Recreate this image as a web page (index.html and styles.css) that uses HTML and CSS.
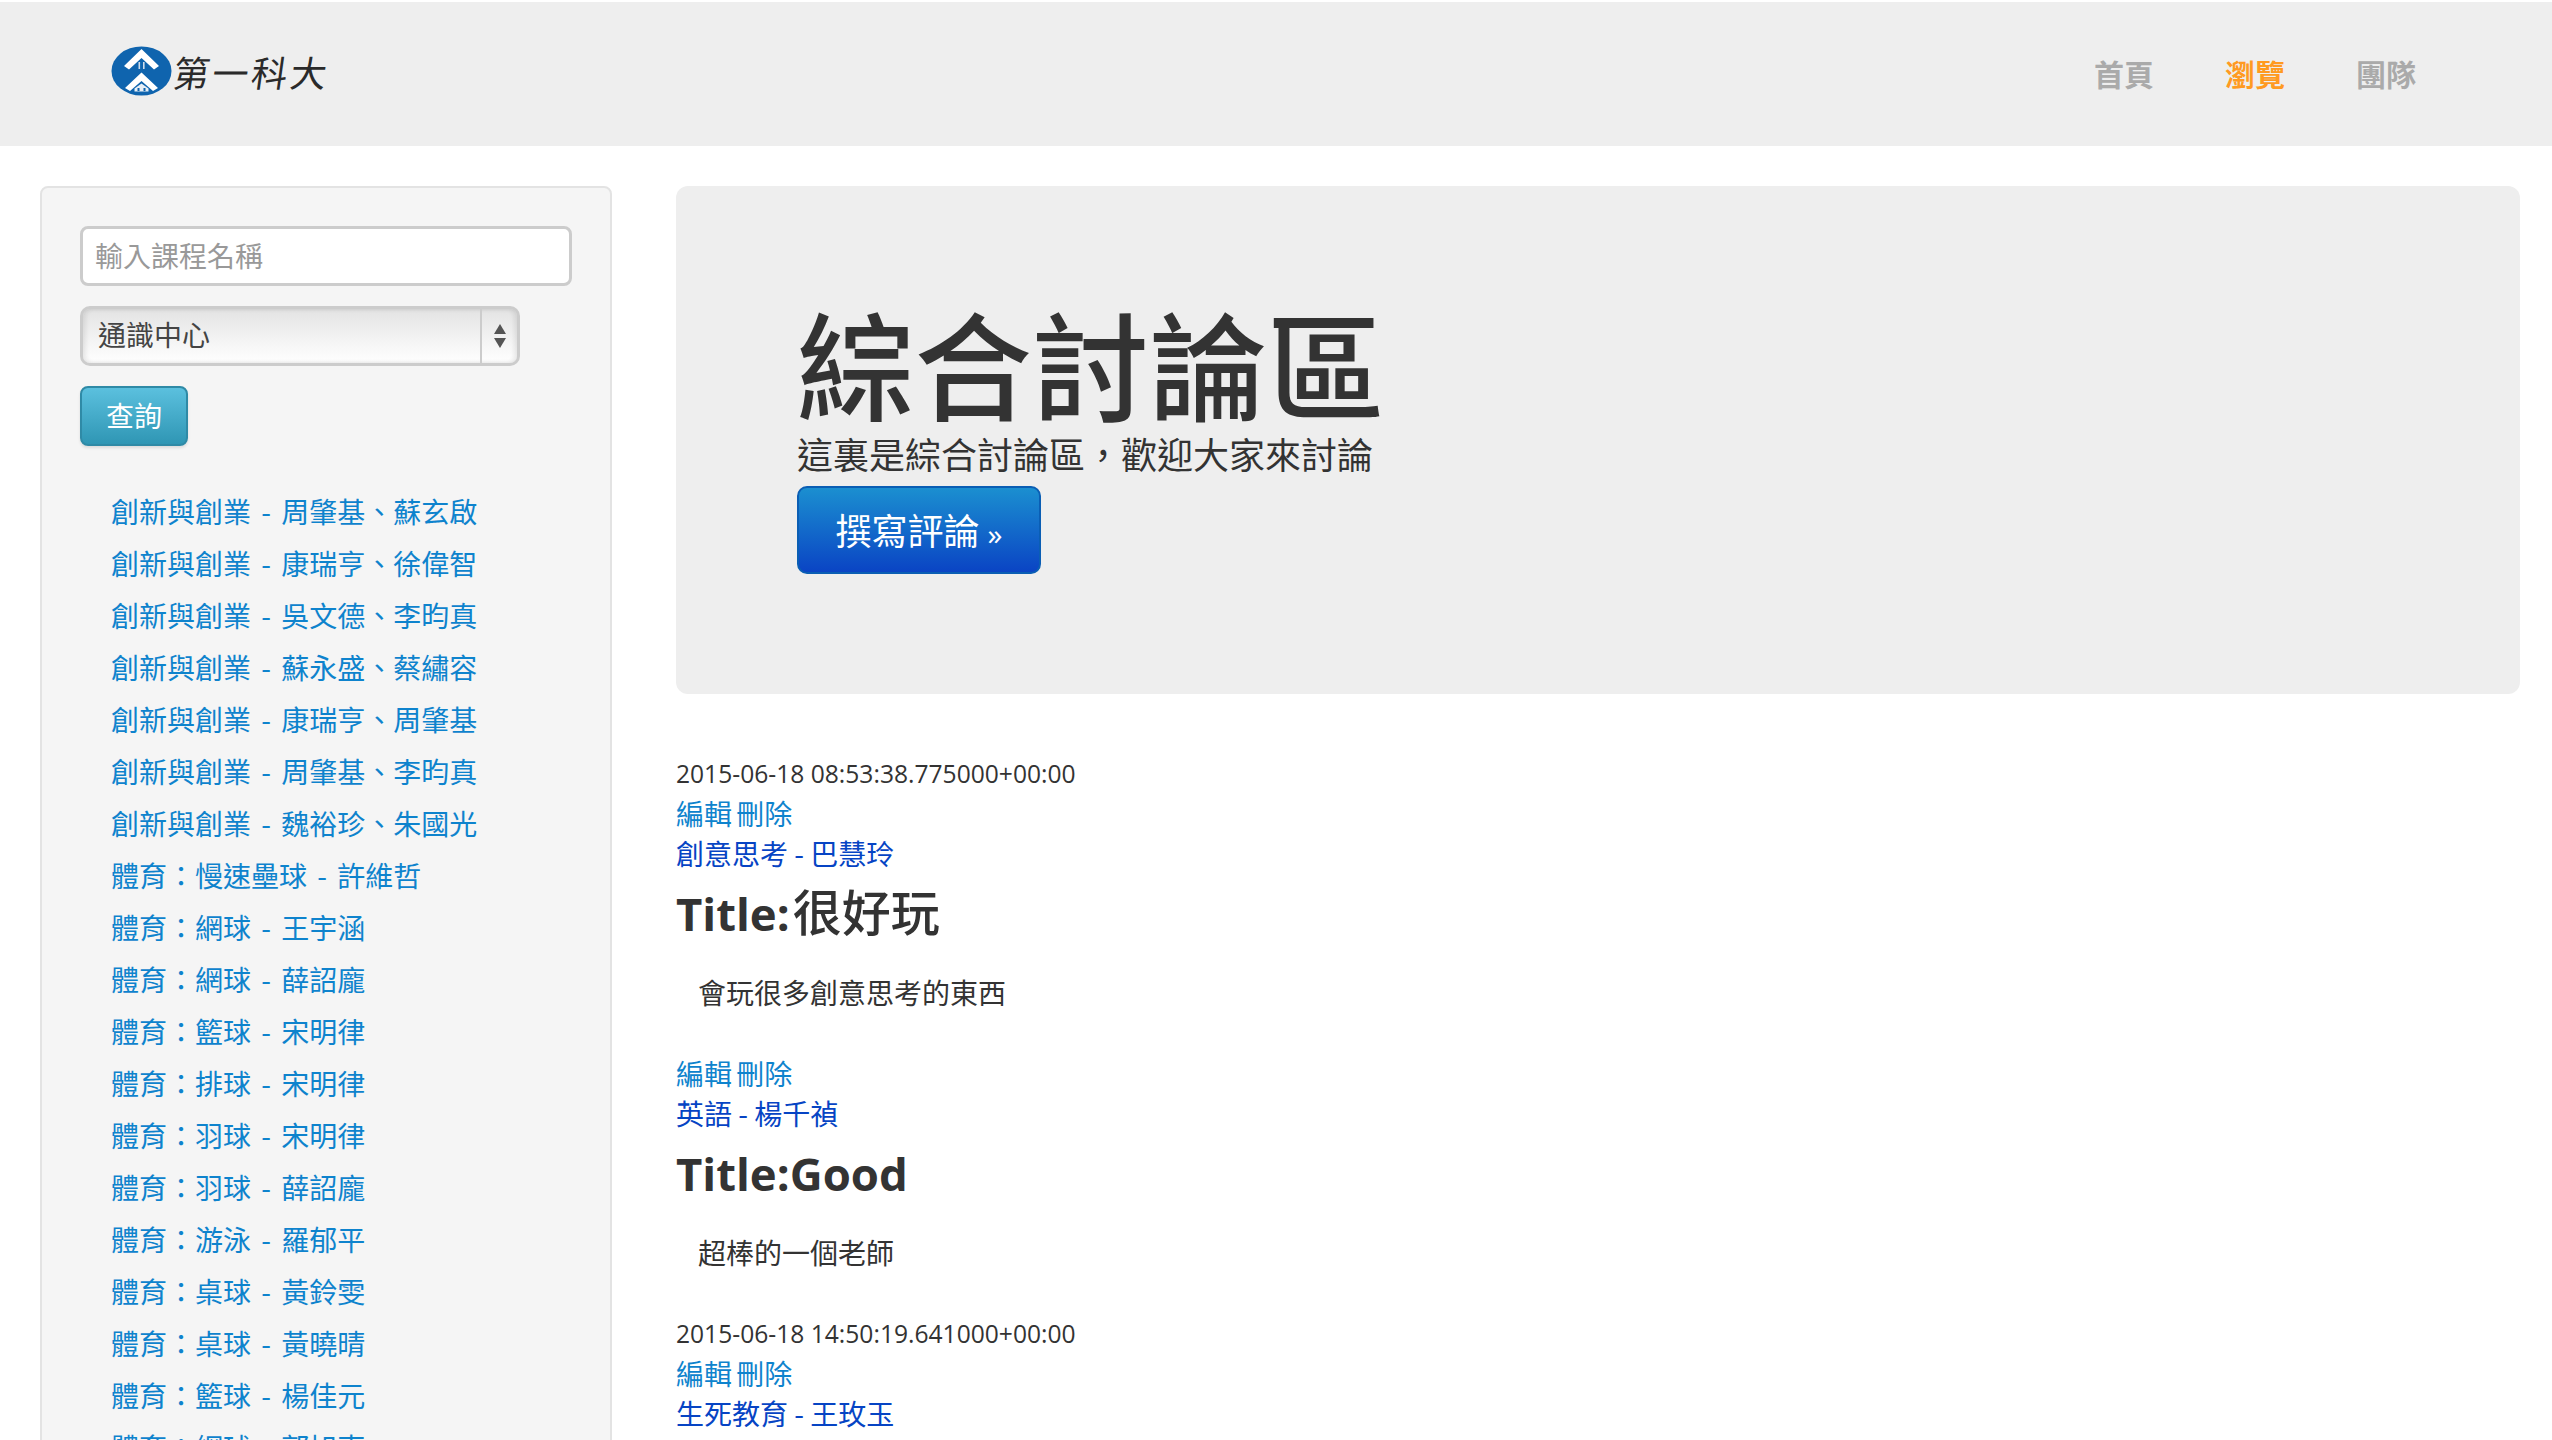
FILE: index.html
```html
<!DOCTYPE html>
<html lang="zh-Hant">
<head>
<meta charset="utf-8">
<title>綜合討論區</title>
<link rel="stylesheet" href="styles.css">
</head>
<body>
<header class="topbar">
  <a class="brand" href="#">
    <svg class="brand-mark" viewBox="0 0 62 50" aria-hidden="true">
      <ellipse cx="31.5" cy="25" rx="30" ry="24.5" fill="#0f64ae"/>
      <path d="M31.5 3 49 20 44 23.5 31.5 12 19 23.5 14 20Z" fill="#fff"/>
      <path d="M31.5 26.5 48 42 43 45 31.5 35 20 45 15 42Z" fill="#fff"/>
      <path d="M24.5 45.5v-3l7-5 7 5v3Z" fill="#e8eff6"/>
      <path d="M28.5 16h1.6v7h-1.6zM33 16h1.6v7H33z" fill="#cfdcea"/>
      <path d="M27.5 42h2v3h-2zM33.5 42h2v3h-2z" fill="#0f64ae"/>
    </svg>
    <span class="brand-text">第一科大</span>
  </a>
  <nav class="topnav">
    <a href="#">首頁</a>
    <a href="#" class="active">瀏覽</a>
    <a href="#">團隊</a>
  </nav>
</header>
<div class="layout">
  <aside class="well">
    <input class="search" type="text" placeholder="輸入課程名稱">
    <div class="select"><span class="select-value">通識中心</span><span class="select-arrows"><i class="up"></i><i class="down"></i></span></div>
    <button class="btn-info" type="button">查詢</button>
    <ul class="courses">
      <li><a href="#">創新與創業 - 周肇基、蘇玄啟</a></li>
      <li><a href="#">創新與創業 - 康瑞亨、徐偉智</a></li>
      <li><a href="#">創新與創業 - 吳文德、李昀真</a></li>
      <li><a href="#">創新與創業 - 蘇永盛、蔡繡容</a></li>
      <li><a href="#">創新與創業 - 康瑞亨、周肇基</a></li>
      <li><a href="#">創新與創業 - 周肇基、李昀真</a></li>
      <li><a href="#">創新與創業 - 魏裕珍、朱國光</a></li>
      <li><a href="#">體育：慢速壘球 - 許維哲</a></li>
      <li><a href="#">體育：網球 - 王宇涵</a></li>
      <li><a href="#">體育：網球 - 薛詔龐</a></li>
      <li><a href="#">體育：籃球 - 宋明律</a></li>
      <li><a href="#">體育：排球 - 宋明律</a></li>
      <li><a href="#">體育：羽球 - 宋明律</a></li>
      <li><a href="#">體育：羽球 - 薛詔龐</a></li>
      <li><a href="#">體育：游泳 - 羅郁平</a></li>
      <li><a href="#">體育：桌球 - 黃鈴雯</a></li>
      <li><a href="#">體育：桌球 - 黃曉晴</a></li>
      <li><a href="#">體育：籃球 - 楊佳元</a></li>
      <li><a href="#">體育：網球 - 郭旭東</a></li>
    </ul>
  </aside>
  <main class="content">
    <section class="hero">
      <h1>綜合討論區</h1>
      <p>這裏是綜合討論區，歡迎大家來討論</p>
      <a class="btn-primary" href="#">撰寫評論 <span class="raquo">»</span></a>
    </section>
    <article class="post">
      <div class="date">2015-06-18 08:53:38.775000+00:00</div>
      <div class="actions"><a href="#">編輯</a> <a href="#">刪除</a></div>
      <div><a class="course" href="#">創意思考 - 巴慧玲</a></div>
      <h3><span class="latin">Title:</span>很好玩</h3>
      <p class="body">會玩很多創意思考的東西</p>
    </article>
    <article class="post">
      <div class="actions"><a href="#">編輯</a> <a href="#">刪除</a></div>
      <div><a class="course" href="#">英語 - 楊千禎</a></div>
      <h3><span class="latin">Title:Good</span></h3>
      <p class="body">超棒的一個老師</p>
    </article>
    <article class="post post-next">
      <div class="date">2015-06-18 14:50:19.641000+00:00</div>
      <div class="actions"><a href="#">編輯</a> <a href="#">刪除</a></div>
      <div><a class="course" href="#">生死教育 - 王玫玉</a></div>
    </article>
  </main>
</div>
</body>
</html>
```
FILE: styles.css
```css
* { box-sizing: border-box; }
html, body { height: 1440px; overflow: hidden; }
body {
  margin: 0;
  background: #fff;
  color: #333;
  font-family: "Noto Sans CJK TC", sans-serif;
  font-size: 28px;
  line-height: 40px;
}
a { text-decoration: none; }

.topbar {
  margin-top: 2px;
  height: 144px;
  background: #eee;
  display: flex;
  align-items: center;
  justify-content: space-between;
  padding: 0 136px 0 110px;
}
.brand { display: flex; align-items: center; gap: 2px; margin-top: -7px; }
.brand-mark { width: 62px; height: 50px; }
.brand-text {
  font-size: 36px;
  line-height: 50px;
  letter-spacing: 3px;
  color: #2a2a2a;
  font-weight: 400;
  transform: skewX(-8deg);
}
.topnav { display: flex; gap: 71px; margin-top: -2px; }
.topnav a {
  font-size: 30px;
  font-weight: 700;
  line-height: 40px;
  color: #aaa;
}
.topnav a.active { color: #ff9a21; }

.layout {
  display: flex;
  align-items: flex-start;
  gap: 64px;
  padding: 40px 32px 0 40px;
}
.well {
  flex: 0 0 572px;
  height: 1300px;
  padding: 38px;
  background: #f5f5f5;
  border: 2px solid #e3e3e3;
  border-radius: 8px;
}
.search {
  display: block;
  width: 492px;
  height: 60px;
  padding: 0 12px 3px;
  background: #fff;
  border: 3px solid #ccc;
  border-radius: 8px;
  color: #555;
  font-family: "Noto Sans CJK TC", sans-serif;
  font-size: 28px;
}
.search::placeholder { color: #999; opacity: 1; }
.select {
  display: flex;
  align-items: stretch;
  width: 440px;
  height: 60px;
  margin-top: 20px;
  background: linear-gradient(#e3e3e3, #f3f3f3 55%, #fff);
  border: 3px solid #ccc;
  border-radius: 10px;
  box-shadow: inset 3px 0 4px rgba(0,0,0,.08), inset -3px 0 4px rgba(0,0,0,.08);
}
.select-value {
  flex: 1;
  padding-left: 15px;
  font-size: 28px;
  line-height: 50px;
  color: #444;
}
.select-arrows {
  flex: 0 0 37px;
  border-left: 2px solid #ccc;
  display: flex;
  flex-direction: column;
  align-items: center;
  justify-content: center;
  gap: 4px;
}
.select-arrows i { width: 0; height: 0; border-left: 6px solid transparent; border-right: 6px solid transparent; }
.select-arrows .up { border-bottom: 10px solid #555; }
.select-arrows .down { border-top: 10px solid #555; }
.btn-info {
  display: block;
  width: 108px;
  height: 60px;
  margin-top: 20px;
  padding: 0 0 3px;
  background: linear-gradient(#5bc0de, #2f96b4);
  border: 2px solid #2f8aa6;
  border-radius: 8px;
  color: #fff;
  font-family: "Noto Sans CJK TC", sans-serif;
  font-size: 28px;
  box-shadow: 0 2px 3px rgba(0,0,0,.1);
}
.courses { list-style: none; margin: 39px 0 0; padding: 0 0 0 31px; }
.courses li { height: 52px; line-height: 52px; white-space: nowrap; }
.courses a {
  font-size: 28px;
  color: #0e83cd;
  word-spacing: 4px;
}

.content { flex: 1; min-width: 0; }
.hero {
  height: 508px;
  padding: 115px 121px 0;
  background: #eee;
  border-radius: 12px;
}
.hero h1 {
  margin: 0;
  font-size: 117.5px;
  font-weight: 500;
  line-height: 120px;
  color: #333;
}
.hero p {
  margin: 12px 0 0;
  font-size: 36px;
  line-height: 40px;
}
.btn-primary {
  display: inline-block;
  width: 244px;
  height: 88px;
  margin-top: 13px;
  background: linear-gradient(#1b8fd0, #0a44c4);
  border: 2px solid #0a5eb4;
  border-radius: 10px;
  color: #fff;
  font-size: 36px;
  line-height: 82px;
  text-align: center;
}
.raquo { font-family: "Open Sans", sans-serif; font-size: 30px; }
.post { margin: 0; }
.post:first-of-type { margin-top: 60px; }
.post-next { padding-top: 2px; }
.date { height: 39px; font-family: "Open Sans", sans-serif; font-size: 24.6px; }
.actions { word-spacing: -2px; }
.actions a { color: #0e83cd; }
.course { color: #0644c4; }
.post h3 {
  margin: 7px 0 0;
  font-size: 49px;
  font-weight: 500;
  line-height: 60px;
  color: #333;
}
.latin { font-family: "Open Sans", sans-serif; font-size: 45.5px; font-weight: 700; margin-right: 3px; }
.post .body {
  margin: 29px 0 40.5px;
  padding-left: 22px;
}
```
